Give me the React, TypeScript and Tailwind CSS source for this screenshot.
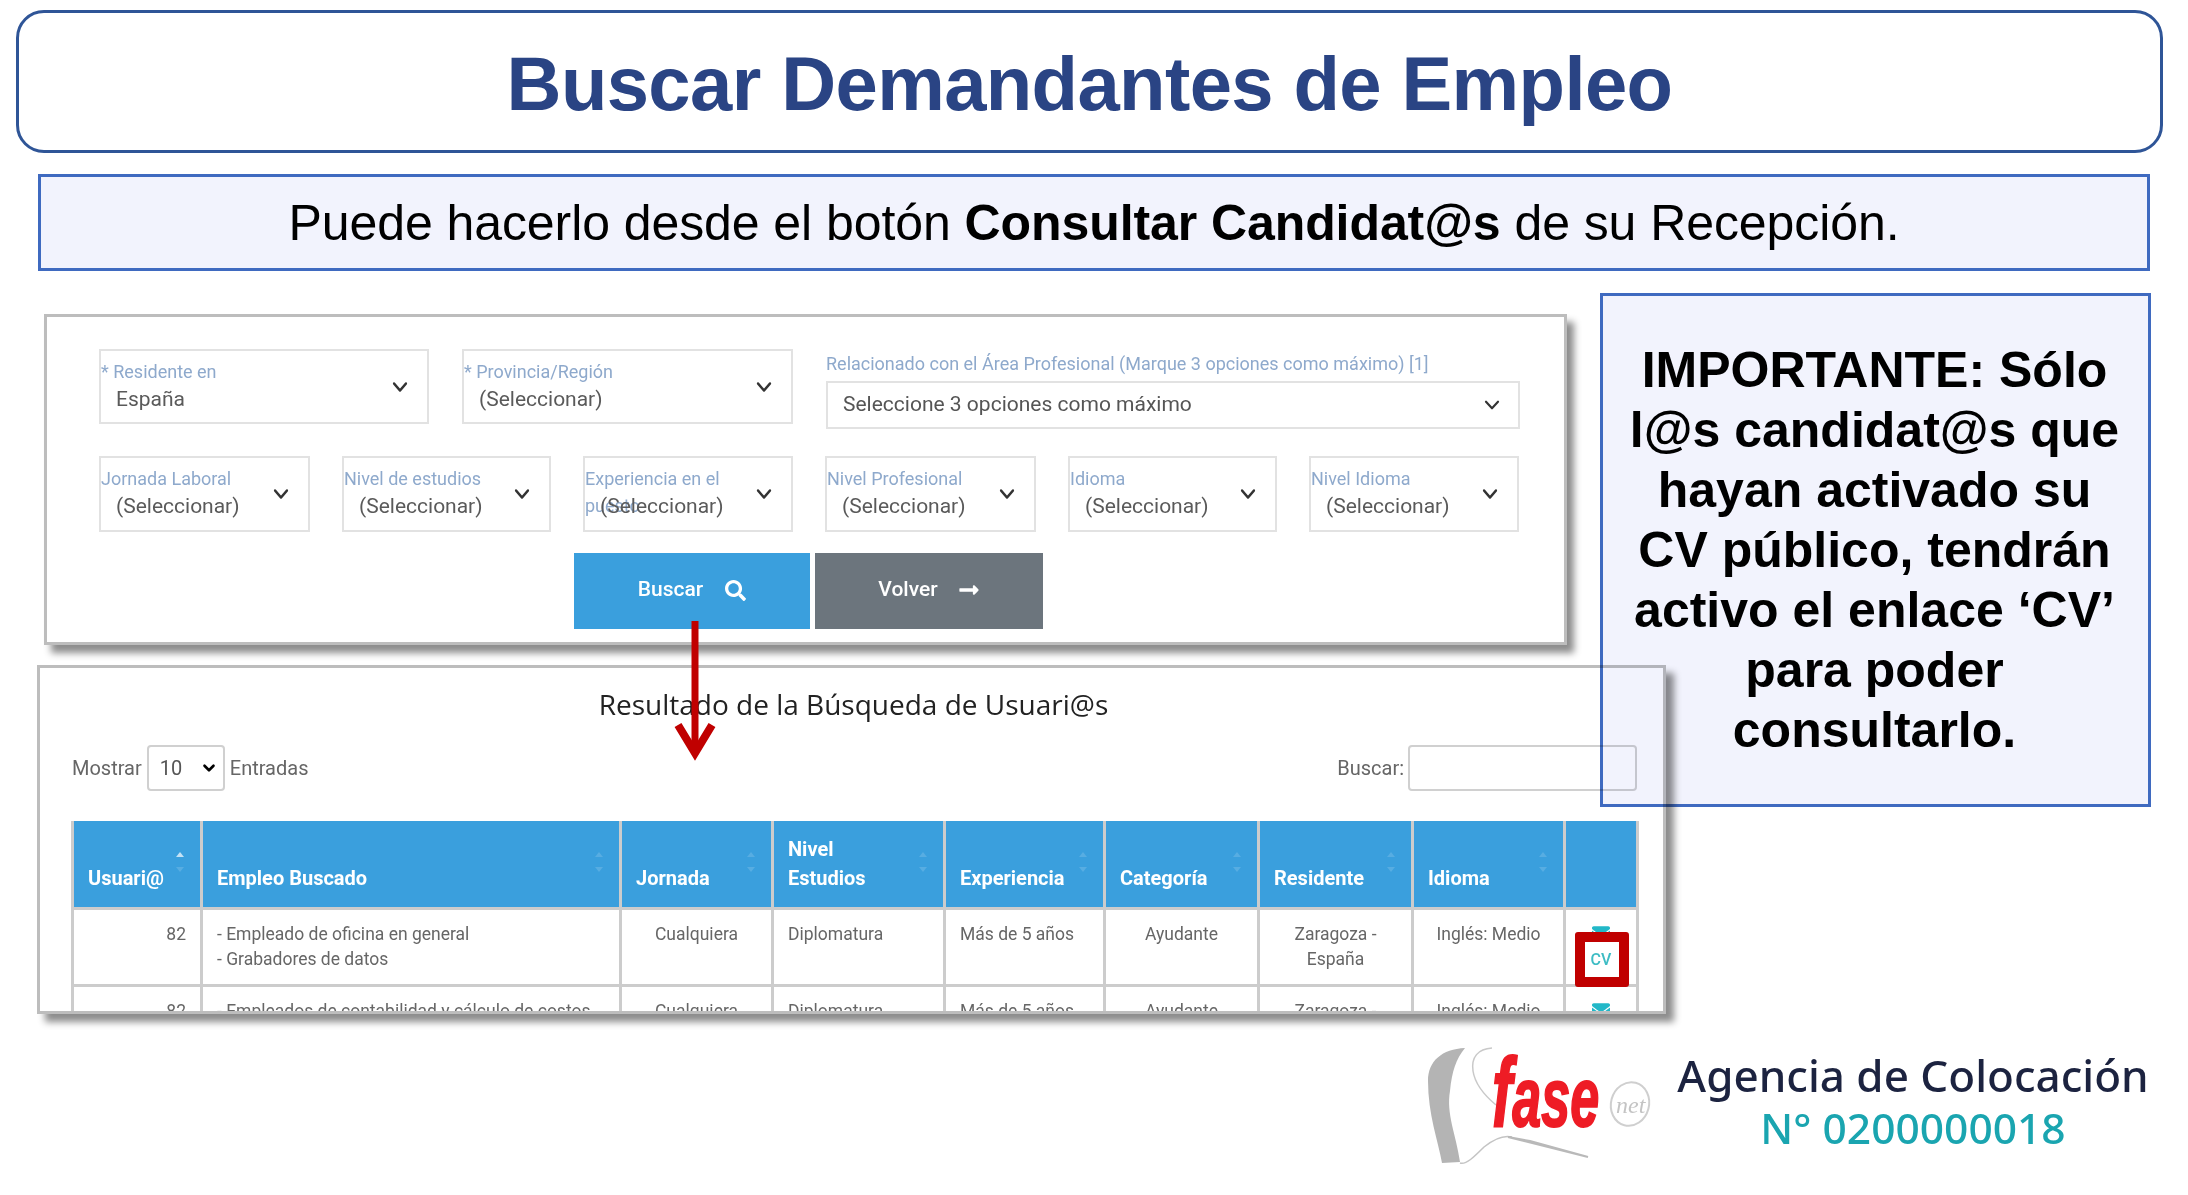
import { ChevronDown } from "lucide-react";
import { FaEnvelope, FaLongArrowAltRight, FaSearch } from "react-icons/fa";

const ROBOTO = "font-['Roboto',sans-serif]";

function FloatSelect({ label, value, width }: { label: string; value: string; width: string }) {
  return (
    <div className={`relative h-full shrink-0 border-2 border-[#e2e2e2] bg-white ${width}`}>
      <span className="absolute left-0 top-[7px] right-[36px] text-[18px] leading-[27px] text-[#8ea9cc]">{label}</span>
      <span className="absolute left-[15px] top-[35px] text-[21px] leading-[27px] text-[#5a5a5a]">{value}</span>
      <ChevronDown className="absolute right-[15px] top-[22px] h-[28px] w-[24px] text-[#333]" strokeWidth={2.2} preserveAspectRatio="none" />
    </div>
  );
}

function SortArrows({ active }: { active?: boolean }) {
  return (
    <svg className="absolute right-[15px] top-[30px] h-[22px] w-[10px]" viewBox="0 0 10 22">
      <path d="M1 6 L5 1 L9 6 Z" fill="#fff" opacity={active ? 0.7 : 0.15} />
      <path d="M1 16 L5 21 L9 16 Z" fill="#fff" opacity={0.15} />
    </svg>
  );
}

const HEADERS = [
  { w: "w-[129px]", lines: ["Usuari@"], active: true },
  { w: "w-[419px]", lines: ["Empleo Buscado"] },
  { w: "w-[152px]", lines: ["Jornada"] },
  { w: "w-[172px]", lines: ["Nivel", "Estudios"] },
  { w: "w-[160px]", lines: ["Experiencia"] },
  { w: "w-[154px]", lines: ["Categoría"] },
  { w: "w-[154px]", lines: ["Residente"] },
  { w: "w-[152px]", lines: ["Idioma"] },
  { w: "w-[73px]", lines: [] as string[] },
];

const ROWS = [
  ["- Empleado de oficina en general", "- Grabadores de datos"],
  ["- Empleados de contabilidad y cálculo de costos"],
];

const CELL = "border-[3px] border-[#cccccc] px-[14px] pt-[12px] align-top text-[17.5px] leading-[25px] text-[#666]";

function ResultsTable() {
  return (
    <table className="w-[1565px] table-fixed border-collapse">
      <thead>
        <tr className="h-[87px] bg-[#3a9fdd]">
          {HEADERS.map((h, i) => (
            <th
              key={i}
              className={`relative border-x-[3px] border-[#cccccc] px-[14px] pb-[14px] text-left align-bottom text-[20px] font-bold leading-[29px] text-white ${h.w}`}
            >
              {h.lines.map((l) => (
                <div key={l}>{l}</div>
              ))}
              {h.lines.length > 0 && <SortArrows active={h.active} />}
            </th>
          ))}
        </tr>
      </thead>
      <tbody>
        {ROWS.map((jobs, i) => (
          <tr key={i} className="h-[77px]">
            <td className={`${CELL} text-right`}>82</td>
            <td className={CELL}>
              {jobs.map((j) => (
                <div key={j}>{j}</div>
              ))}
            </td>
            <td className={`${CELL} text-center`}>Cualquiera</td>
            <td className={CELL}>Diplomatura</td>
            <td className={CELL}>Más de 5 años</td>
            <td className={`${CELL} text-center`}>Ayudante</td>
            <td className={`${CELL} text-center`}>
              Zaragoza -<br />
              España
            </td>
            <td className={`${CELL} text-center`}>Inglés: Medio</td>
            <td className={`${CELL} relative text-center`}>
              <FaEnvelope className="mx-auto mt-[2px] h-[18px] w-[18px] text-[#22b8c8]" />
              <div className="mt-[7px] text-[16px] font-medium leading-[22px] text-[#3dbcc4]">CV</div>
              {i === 0 && (
                <div className="absolute left-[9px] top-[22px] h-[55px] w-[54px] rounded-[3px] border-[10px] border-[#c00000]" />
              )}
            </td>
          </tr>
        ))}
      </tbody>
    </table>
  );
}

function FaseLogo() {
  return (
    <svg className="h-[160px] w-[260px] shrink-0" viewBox="0 0 260 160">
      <path d="M65 19 C42 20 28 32 28 52 C28 85 38 112 42 134 L60 133 C56 105 46 85 50 62 C52 42 56 30 65 19 Z" fill="#b4b4b4" />
      <path d="M92 19 C78 20 71 28 73 42 C75 55 84 66 96 76" fill="none" stroke="#c9c9c9" strokeWidth="1.5" />
      <path d="M60 134 C66 136 74 128 84 118 C94 110 104 106 112 108" fill="none" stroke="#c4c4c4" strokeWidth="1.5" />
      <path d="M108 108 L188 128 L130 112 Z" fill="#b9b9b9" stroke="#b9b9b9" strokeWidth="2" />
      <text
        transform="translate(92 97) scale(0.62 1)"
        fontFamily="'Liberation Sans',sans-serif"
        fontWeight="700"
        fontStyle="italic"
        fill="#ee1c25"
        stroke="#ee1c25"
        strokeWidth="2"
      >
        <tspan fontSize="98">f</tspan>
        <tspan fontSize="84">ase</tspan>
      </text>
      <ellipse cx="230" cy="75" rx="19" ry="22" fill="none" stroke="#cfcfcf" strokeWidth="2" transform="rotate(15 230 75)" />
      <text x="216" y="84" fontFamily="'Liberation Serif',serif" fontSize="24" fontStyle="italic" fill="#c4c4c4">
        net
      </text>
    </svg>
  );
}

export default function App() {
  return (
    <div className={`relative h-[1195px] w-[2188px] overflow-hidden bg-white pt-[10px] ${ROBOTO}`}>
      <div className="ml-[16px] flex h-[143px] w-[2147px] items-center justify-center rounded-[28px] border-[3px] border-[#2f5597] pt-[5px]">
        <h1 className="font-['Liberation_Sans',sans-serif] text-[76px] font-bold leading-none tracking-[-0.6px] text-[#2a4484]">
          Buscar Demandantes de Empleo
        </h1>
      </div>

      <div className="ml-[38px] mt-[21px] flex h-[97px] w-[2112px] items-center justify-center border-[3px] border-[#3f6ac0] bg-[#f2f3fd]">
        <p className="font-['Liberation_Sans',sans-serif] text-[50px] leading-none tracking-[-0.08px] text-black">
          Puede hacerlo desde el botón <b>Consultar Candidat@s</b> de su Recepción.
        </p>
      </div>

      <section className="ml-[44px] mt-[43px] h-[331px] w-[1523px] border-[3px] border-[#bdbdbd] bg-white pl-[52px] pt-[32px] shadow-[7px_8px_7px_rgba(0,0,0,0.45)]">
        <div className="flex h-[80px] gap-[33px]">
          <div className="h-[75px]">
            <FloatSelect label="* Residente en" value="España" width="w-[330px]" />
          </div>
          <div className="h-[75px]">
            <FloatSelect label="* Provincia/Región" value="(Seleccionar)" width="w-[331px]" />
          </div>
          <div className="w-[694px]">
            <div className="h-[32px] text-[18px] leading-[30px] text-[#8ea9cc]">
              Relacionado con el Área Profesional (Marque 3 opciones como máximo) [1]
            </div>
            <div className="flex h-[48px] items-center justify-between border-2 border-[#e2e2e2] pl-[15px] pr-[14px] text-[21px] text-[#555]">
              Seleccione 3 opciones como máximo
              <ChevronDown className="h-[26px] w-[24px] text-[#333]" strokeWidth={2.2} preserveAspectRatio="none" />
            </div>
          </div>
        </div>

        <div className="mt-[27px] flex h-[76px] gap-[32px]">
          <FloatSelect label="Jornada Laboral" value="(Seleccionar)" width="w-[211px]" />
          <FloatSelect label="Nivel de estudios" value="(Seleccionar)" width="w-[209px]" />
          <FloatSelect label="Experiencia en el puesto" value="(Seleccionar)" width="w-[210px]" />
          <FloatSelect label="Nivel Profesional" value="(Seleccionar)" width="w-[211px]" />
          <FloatSelect label="Idioma" value="(Seleccionar)" width="w-[209px]" />
          <FloatSelect label="Nivel Idioma" value="(Seleccionar)" width="w-[210px]" />
        </div>

        <div className="ml-[475px] mt-[21px] flex h-[76px] gap-[5px] text-[21px] font-medium text-white">
          <div className="flex w-[236px] items-center justify-center gap-[22px] bg-[#3a9fdd] pb-[2px]">
            Buscar
            <FaSearch className="h-[21px] w-[21px]" />
          </div>
          <div className="flex w-[228px] items-center justify-center gap-[20px] bg-[#6c757d] pb-[2px]">
            Volver
            <FaLongArrowAltRight className="h-[22px] w-[22px]" />
          </div>
        </div>
      </section>

      <section className="ml-[37px] mt-[20px] h-[349px] w-[1629px] border-[3px] border-[#bdbdbd] bg-white pl-[31px] shadow-[8px_8px_7px_rgba(0,0,0,0.45)]">
        <div className="h-full overflow-hidden">
          <h2 className="mt-[18px] w-[1565px] text-center font-['Open_Sans',sans-serif] text-[28px] font-medium leading-[36px] text-[#222]">
            Resultado de la Búsqueda de Usuari@s
          </h2>
          <div className="mt-[23px] flex h-[46px] w-[1566px] items-center justify-between pl-[1px] text-[20px] text-[#666]">
            <div className="flex items-center gap-[5px]">
              Mostrar
              <div className="flex h-[46px] w-[78px] items-center justify-between rounded-[4px] border-2 border-[#d0d0d0] pl-[11px] pr-[5px] text-[#555]">
                10
                <ChevronDown className="h-[18px] w-[18px] text-black" strokeWidth={3.5} />
              </div>
              Entradas
            </div>
            <div className="flex items-center gap-[4px]">
              Buscar:
              <input className="h-[46px] w-[229px] rounded-[4px] border-2 border-[#d0d0d0] bg-white" />
            </div>
          </div>
          <div className="mt-[30px]">
            <ResultsTable />
          </div>
        </div>
      </section>

      <footer className="mt-[15px] flex pl-[1400px]">
        <FaseLogo />
        <div className="w-[506px] pt-[20px] text-center font-['Noto_Sans',sans-serif] font-medium leading-[52px]">
          <div className="text-[44px] text-[#1c2340]">Agencia de Colocación</div>
          <div className="mt-[1px] text-[42.5px] text-[#1aa5b0]">N° 0200000018</div>
        </div>
      </footer>

      <aside className="absolute left-[1600px] top-[293px] flex h-[514px] w-[551px] items-center justify-center border-[3px] border-[#3f6ac0] bg-[#f2f3fd] pr-[2px] text-center font-['Liberation_Sans',sans-serif] text-[50px] font-bold leading-[60px] text-black mix-blend-multiply">
        <p>
          IMPORTANTE: Sólo
          <br />
          l@s candidat@s que
          <br />
          hayan activado su
          <br />
          CV público, tendrán
          <br />
          activo el enlace ‘CV’
          <br />
          para poder
          <br />
          consultarlo.
        </p>
      </aside>

      <svg className="absolute left-[672px] top-[621px] h-[142px] w-[46px]" viewBox="0 0 46 142">
        <path d="M23 0 V128" stroke="#c00000" strokeWidth="7" fill="none" />
        <path d="M6 104 L23 132 L40 104" stroke="#c00000" strokeWidth="8" fill="none" />
      </svg>
    </div>
  );
}
